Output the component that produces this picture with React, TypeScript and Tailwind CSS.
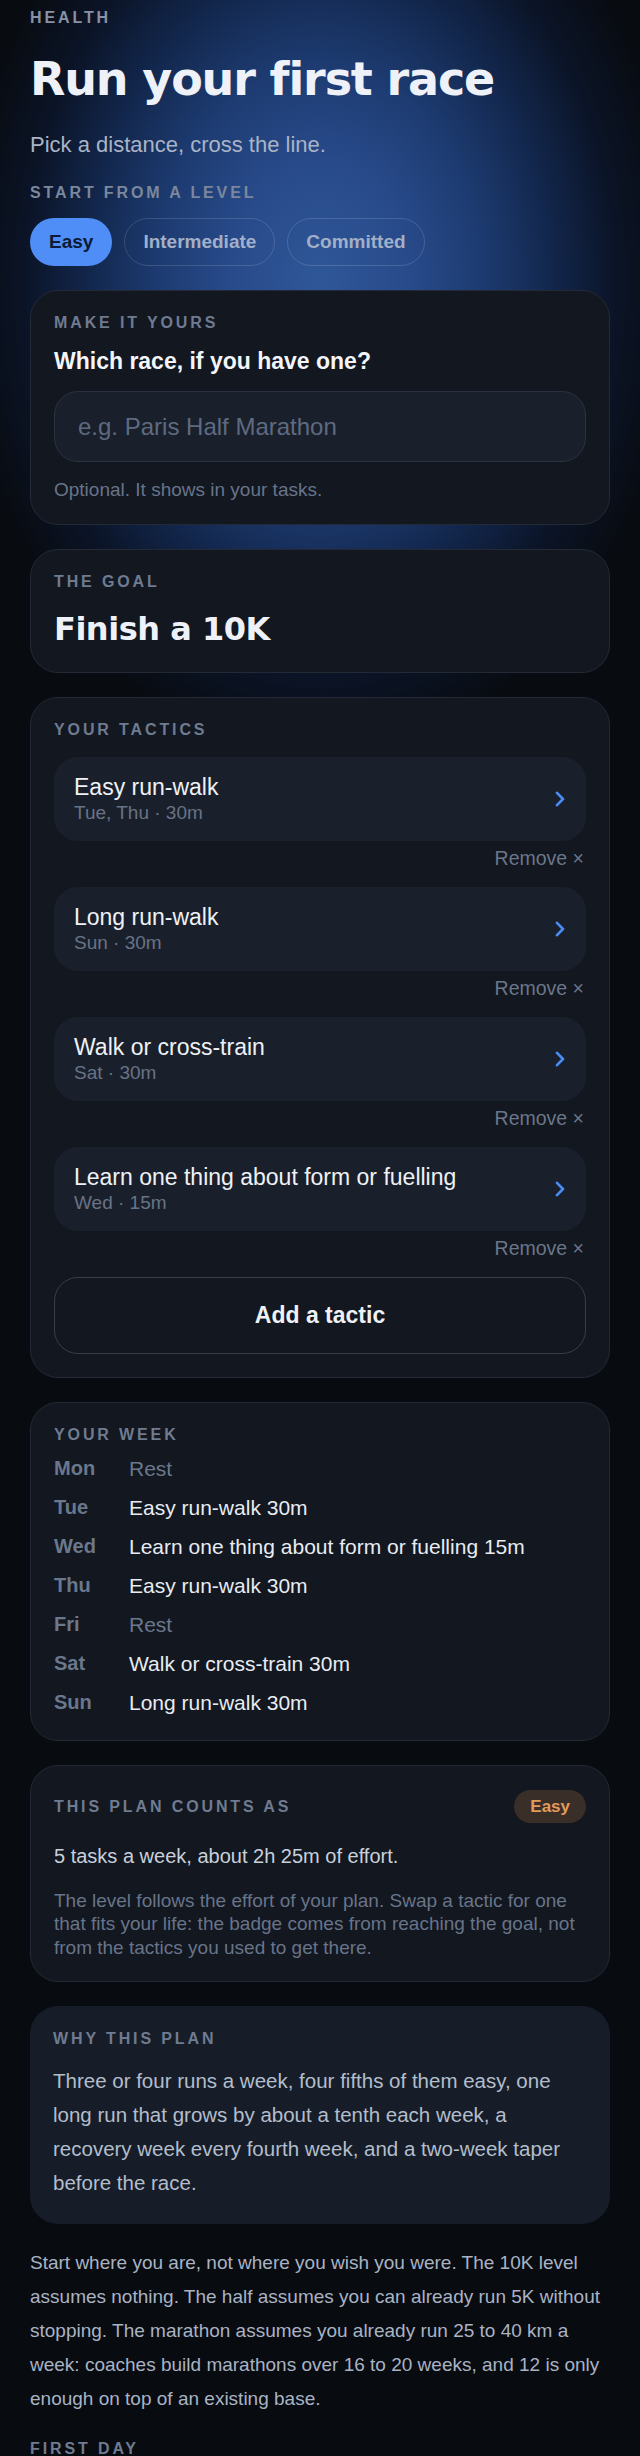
import React from "react";

const tactics = [
  { name: "Easy run-walk", meta: "Tue, Thu · 30m" },
  { name: "Long run-walk", meta: "Sun · 30m" },
  { name: "Walk or cross-train", meta: "Sat · 30m" },
  { name: "Learn one thing about form or fuelling", meta: "Wed · 15m" },
];

const week: { day: string; what: string; rest?: boolean }[] = [
  { day: "Mon", what: "Rest", rest: true },
  { day: "Tue", what: "Easy run-walk 30m" },
  { day: "Wed", what: "Learn one thing about form or fuelling 15m" },
  { day: "Thu", what: "Easy run-walk 30m" },
  { day: "Fri", what: "Rest", rest: true },
  { day: "Sat", what: "Walk or cross-train 30m" },
  { day: "Sun", what: "Long run-walk 30m" },
];

function Label({ children, className = "" }: { children: React.ReactNode; className?: string }) {
  return (
    <div
      className={
        "text-[16px] font-bold uppercase leading-[18px] tracking-[0.18em] text-[#6f7b91] " + className
      }
    >
      {children}
    </div>
  );
}

function Chevron() {
  return (
    <svg width="10" height="16" viewBox="0 0 10 16" fill="none" className="shrink-0">
      <polyline
        points="2,1.8 8,8 2,14.2"
        stroke="#4a8cf6"
        strokeWidth="2.6"
        strokeLinecap="round"
        strokeLinejoin="round"
      />
    </svg>
  );
}

export default function App() {
  return (
    <div className="min-h-screen w-[640px] overflow-hidden bg-[#080b10] bg-[radial-gradient(ellipse_360px_480px_at_50%_280px,#2f5798_0%,#284a8a_25%,#1d3b71_45%,#12264b_65%,#0b1427_82%,#080b10_100%)] bg-no-repeat font-['Liberation_Sans',Arial,sans-serif]">
      <div className="px-[30px] pt-[9px] pb-10">
        <Label className="text-[#8792a6]">Health</Label>
        <h1 className="mt-[27px] font-['DejaVu_Sans',sans-serif] text-[46px] font-bold leading-[50px] tracking-[-0.025em] text-[#eef2f8]">
          Run your first race
        </h1>
        <p className="mt-[25px] text-[22px] leading-[31px] text-[#a9b4c6]">Pick a distance, cross the line.</p>
        <Label className="mt-[24px] text-[#7b879c]">Start from a level</Label>
        <div className="mt-[16px] flex gap-[12px]">
          <button className="h-[48px] rounded-full bg-[#4f8ef7] px-[19px] text-[19px] font-bold text-[#0b1a36]">
            Easy
          </button>
          <button className="h-[48px] rounded-full border border-[rgba(255,255,255,0.14)] px-[18px] text-[19px] font-bold text-[#a2b0c7]">
            Intermediate
          </button>
          <button className="h-[48px] rounded-full border border-[rgba(255,255,255,0.14)] px-[18px] text-[19px] font-bold text-[#a2b0c7]">
            Committed
          </button>
        </div>

        {/* Make it yours */}
        <section className="mt-[24px] rounded-[28px] border border-[#232a36] bg-[#121720] px-[23px] pt-[23px] pb-[21px]">
          <Label>Make it yours</Label>
          <div className="mt-[16px] text-[23px] font-bold leading-[26px] text-[#f3f5f9]">
            Which race, if you have one?
          </div>
          <input
            className="mt-[17px] block h-[71px] w-full rounded-[24px] border border-[#2a3241] bg-[#1a202b] px-[23px] text-[24px] text-[#e8ecf2] outline-none placeholder:text-[#5e6a80]"
            placeholder="e.g. Paris Half Marathon"
          />
          <div className="mt-[15px] text-[19px] leading-[26px] text-[#687489]">Optional. It shows in your tasks.</div>
        </section>

        {/* Goal */}
        <section className="mt-[24px] rounded-[28px] border border-[#232a36] bg-[#121720] px-[23px] pt-[23px] pb-[24px]">
          <Label>The goal</Label>
          <div className="mt-[19px] font-['DejaVu_Sans',sans-serif] text-[32px] font-bold leading-[38px] tracking-[-0.015em] text-[#eef2f8]">
            Finish a 10K
          </div>
        </section>

        {/* Tactics */}
        <section className="mt-[24px] rounded-[28px] border border-[#232a36] bg-[#121720] px-[23px] pt-[23px] pb-[23px]">
          <Label>Your tactics</Label>
          <div className="mt-[18px] flex flex-col gap-[16px]">
            {tactics.map((t) => (
              <div key={t.name}>
                <div className="flex h-[84px] items-center justify-between rounded-[24px] bg-[#1a202b] pl-[20px] pr-[21px]">
                  <div>
                    <div className="text-[23px] leading-[28px] text-[#eef1f6]">{t.name}</div>
                    <div className="text-[19px] leading-[24px] text-[#687386]">{t.meta}</div>
                  </div>
                  <Chevron />
                </div>
                <div className="mt-[4px] pr-[2px] text-right text-[19.5px] leading-[26px] text-[#6b768a]">
                  Remove ×
                </div>
              </div>
            ))}
          </div>
          <button className="mt-[16px] h-[77px] w-full rounded-[24px] border-[1.5px] border-[#363e4c] text-[23px] font-bold text-[#eef2f7]">
            Add a tactic
          </button>
        </section>

        {/* Week */}
        <section className="mt-[24px] rounded-[28px] border border-[#232a36] bg-[#121720] px-[23px] pt-[23px] pb-[18px]">
          <Label>Your week</Label>
          <div className="mt-[5px]">
            {week.map((w) => (
              <div key={w.day} className="flex leading-[39px]">
                <div className="w-[75px] shrink-0 text-[20px] font-bold text-[#6b778c]">{w.day}</div>
                <div className={"text-[21px] " + (w.rest ? "text-[#6b778c]" : "text-[#e8ecf2]")}>{w.what}</div>
              </div>
            ))}
          </div>
        </section>

        {/* Counts as */}
        <section className="mt-[24px] rounded-[28px] border border-[#232a36] bg-[#121720] px-[23px] pt-[24px] pb-[22px]">
          <div className="flex items-center justify-between">
            <Label>This plan counts as</Label>
            <span className="flex h-[33px] items-center rounded-full bg-[#3a2e28] px-[16px] text-[17px] font-bold text-[#e39a5c]">
              Easy
            </span>
          </div>
          <div className="mt-[22px] text-[20px] leading-[23px] text-[#c9d0db]">
            5 tasks a week, about 2h 25m of effort.
          </div>
          <p className="mt-[21px] text-[19px] leading-[23.3px] text-[#687489]">
            The level follows the effort of your plan. Swap a tactic for one that fits your life: the badge comes from
            reaching the goal, not from the tactics you used to get there.
          </p>
        </section>

        {/* Why */}
        <section className="mt-[24px] rounded-[28px] bg-[#161d28] px-[23px] pt-[24px] pb-[24px]">
          <Label>Why this plan</Label>
          <p className="mt-[16px] text-[20.5px] leading-[34px] text-[#b3bdcc]">
            Three or four runs a week, four fifths of them easy, one long run that grows by about a tenth each week, a
            recovery week every fourth week, and a two-week taper before the race.
          </p>
        </section>

        <p className="mt-[22px] text-[19px] leading-[34px] text-[#a9b3c4]">
          Start where you are, not where you wish you were. The 10K level assumes nothing. The half assumes you can
          already run 5K without stopping. The marathon assumes you already run 25 to 40 km a week: coaches build
          marathons over 16 to 20 weeks, and 12 is only enough on top of an existing base.
        </p>

        <Label className="mt-[24px]">First day</Label>
      </div>
    </div>
  );
}
